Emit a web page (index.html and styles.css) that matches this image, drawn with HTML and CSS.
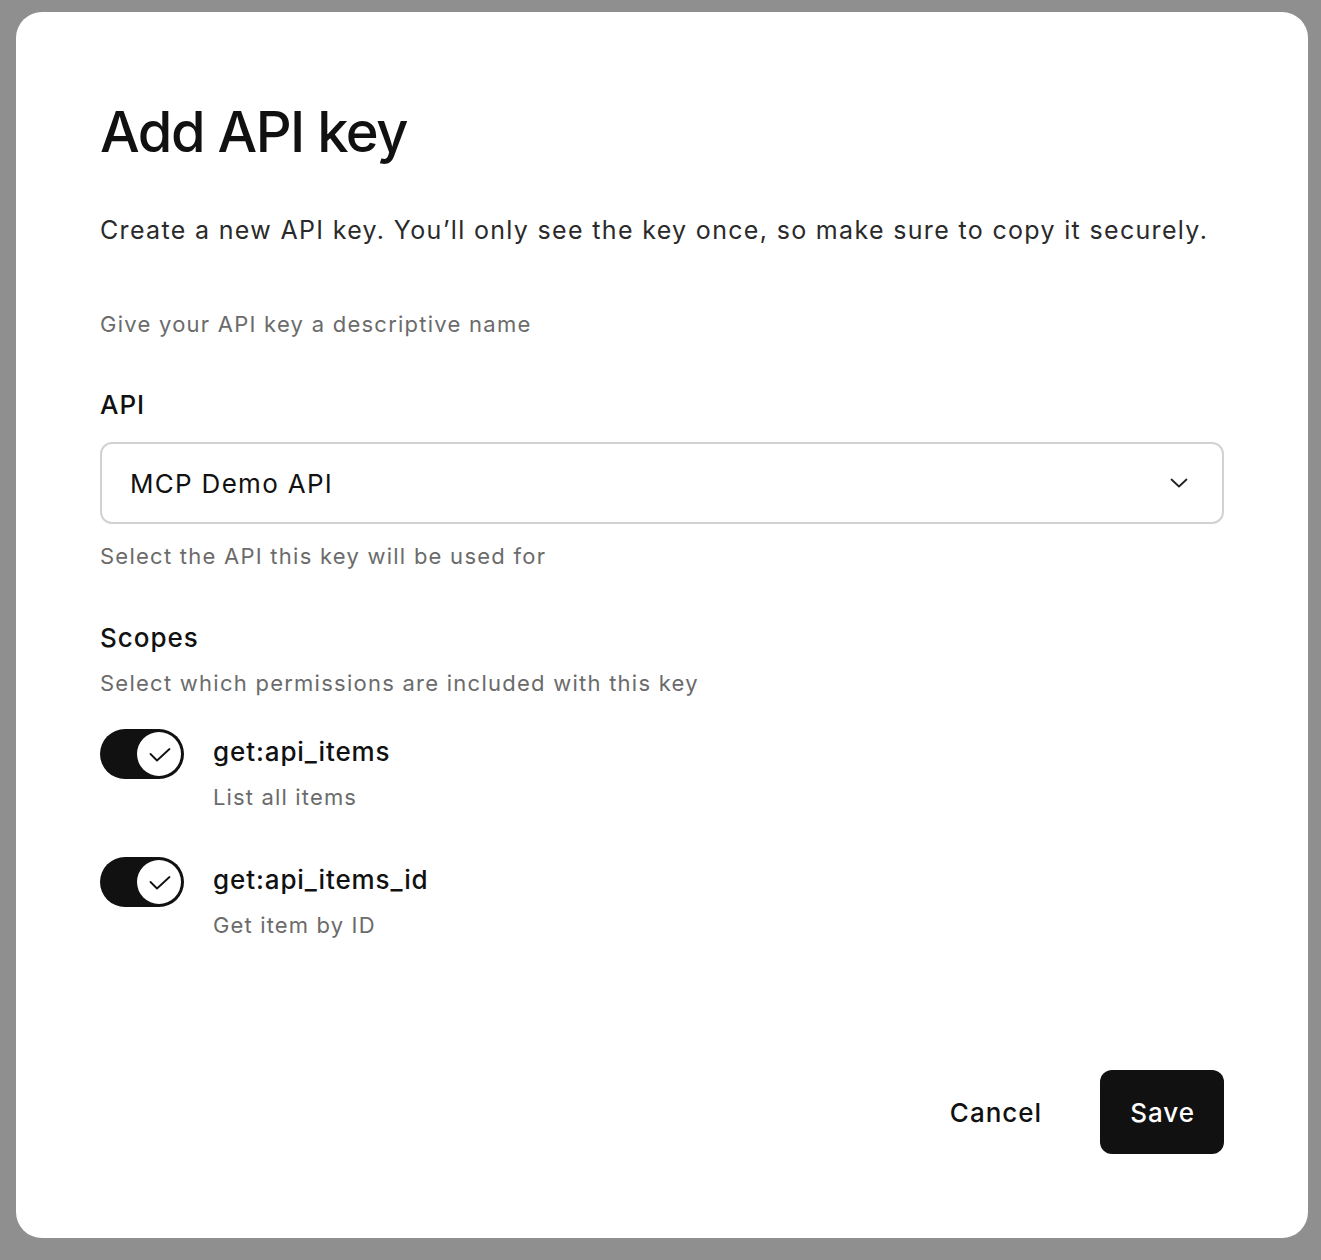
FILE: index.html
```html
<!DOCTYPE html>
<html lang="en">
<head>
    <meta charset="UTF-8">
    <meta name="viewport" content="width=device-width, initial-scale=1.0">
    <title>Add API key</title>
    <link rel="stylesheet" href="styles.css">
</head>
<body>
    <div class="dialog">
        <h1 class="dialog-title">Add API key</h1>
        <p class="dialog-desc">Create a new API key. You’ll only see the key once, so make sure to copy it securely.</p>

        <p class="hint hint-name">Give your API key a descriptive name</p>

        <div class="field">
            <label class="field-label">API</label>
            <div class="select">
                <span class="select-value">MCP Demo API</span>
                <svg class="select-chevron" width="18" height="10" viewBox="0 0 18 10">
                    <path d="M1.5 1.5 9 8.5l7.5-7" fill="none" stroke="#222" stroke-width="1.8" stroke-linecap="round" stroke-linejoin="round"/>
                </svg>
            </div>
            <p class="hint hint-select">Select the API this key will be used for</p>
        </div>

        <div class="scopes">
            <div class="field-label">Scopes</div>
            <p class="hint hint-scopes">Select which permissions are included with this key</p>

            <div class="scope-list">
                <div class="scope-row">
                    <div class="toggle">
                        <span class="toggle-knob">
                            <svg width="22" height="14" viewBox="0 0 22 14">
                                <path d="M1.5 6 8 12.5 20.5 1" fill="none" stroke="#111" stroke-width="1.8" stroke-linecap="round" stroke-linejoin="round"/>
                            </svg>
                        </span>
                    </div>
                    <div class="scope-text">
                        <div class="scope-name">get:api_items</div>
                        <div class="scope-desc">List all items</div>
                    </div>
                </div>
                <div class="scope-row">
                    <div class="toggle">
                        <span class="toggle-knob">
                            <svg width="22" height="14" viewBox="0 0 22 14">
                                <path d="M1.5 6 8 12.5 20.5 1" fill="none" stroke="#111" stroke-width="1.8" stroke-linecap="round" stroke-linejoin="round"/>
                            </svg>
                        </span>
                    </div>
                    <div class="scope-text">
                        <div class="scope-name">get:api_items_id</div>
                        <div class="scope-desc">Get item by ID</div>
                    </div>
                </div>
            </div>
        </div>

        <div class="dialog-actions">
            <button class="btn btn-cancel">Cancel</button>
            <button class="btn btn-save">Save</button>
        </div>
    </div>
</body>
</html>
```

FILE: styles.css
```css
* {
    margin: 0;
    padding: 0;
    box-sizing: border-box;
}

body {
    font-family: 'Inter', 'Noto Sans', sans-serif;
    background: #8f8f8f;
    color: #111111;
    padding: 12px 13px 22px 16px;
}

.dialog {
    background: #ffffff;
    width: 1292px;
    height: 1226px;
    border-radius: 26px;
    padding: 86px 84px 84px 84px;
    display: flex;
    flex-direction: column;
}

.dialog-title {
    font-size: 56px;
    font-weight: 500;
    line-height: 68px;
    letter-spacing: -1.5px;
    color: #111111;
}

.dialog-desc {
    margin-top: 46px;
    font-size: 25px;
    line-height: 36px;
    letter-spacing: 1.33px;
    color: #2a2a2a;
}

.hint {
    font-size: 22px;
    line-height: 32px;
    letter-spacing: 1.25px;
    color: #6b6b6b;
}

.hint-name {
    margin-top: 60px;
}

.field {
    margin-top: 47px;
}

.field-label {
    display: block;
    font-size: 26px;
    font-weight: 500;
    line-height: 36px;
    letter-spacing: 1px;
    color: #111111;
}

.select {
    margin-top: 19px;
    height: 82px;
    border: 2px solid #d2d2d2;
    border-radius: 12px;
    padding: 0 34px 0 28px;
    display: flex;
    align-items: center;
    justify-content: space-between;
}

.select-value {
    font-size: 26px;
    letter-spacing: 1.3px;
    color: #111111;
}

.hint-select {
    margin-top: 16px;
}

.scopes {
    margin-top: 48px;
}

.hint-scopes {
    margin-top: 11px;
}

.scope-list {
    margin-top: 30px;
    display: flex;
    flex-direction: column;
    gap: 44px;
}

.scope-row {
    display: flex;
    align-items: flex-start;
    gap: 29px;
}

.toggle {
    width: 84px;
    height: 50px;
    border-radius: 25px;
    background: #111111;
    padding: 3px;
    display: flex;
    justify-content: flex-end;
}

.toggle-knob {
    width: 44px;
    height: 44px;
    border-radius: 50%;
    background: #ffffff;
    display: flex;
    align-items: center;
    justify-content: center;
}

.toggle-knob svg {
    margin: 2px 0 0 2px;
}

.scope-text {
    margin-top: 5px;
}

.scope-name {
    font-size: 26px;
    font-weight: 500;
    line-height: 36px;
    letter-spacing: 0.9px;
}

.scope-desc {
    margin-top: 11px;
    font-size: 22px;
    line-height: 32px;
    letter-spacing: 1.15px;
    color: #6b6b6b;
}

.dialog-actions {
    margin-top: auto;
    display: flex;
    justify-content: flex-end;
    align-items: center;
    gap: 30px;
}

.btn {
    font-family: 'Inter', 'Noto Sans', sans-serif;
    font-size: 26px;
    font-weight: 500;
    letter-spacing: 1px;
    height: 84px;
    border: none;
    border-radius: 12px;
    cursor: pointer;
}

.btn-cancel {
    background: transparent;
    color: #111111;
    padding: 0 28px;
}

.btn-save {
    background: #111111;
    color: #ffffff;
    padding: 0 29px 0 30px;
}
```
